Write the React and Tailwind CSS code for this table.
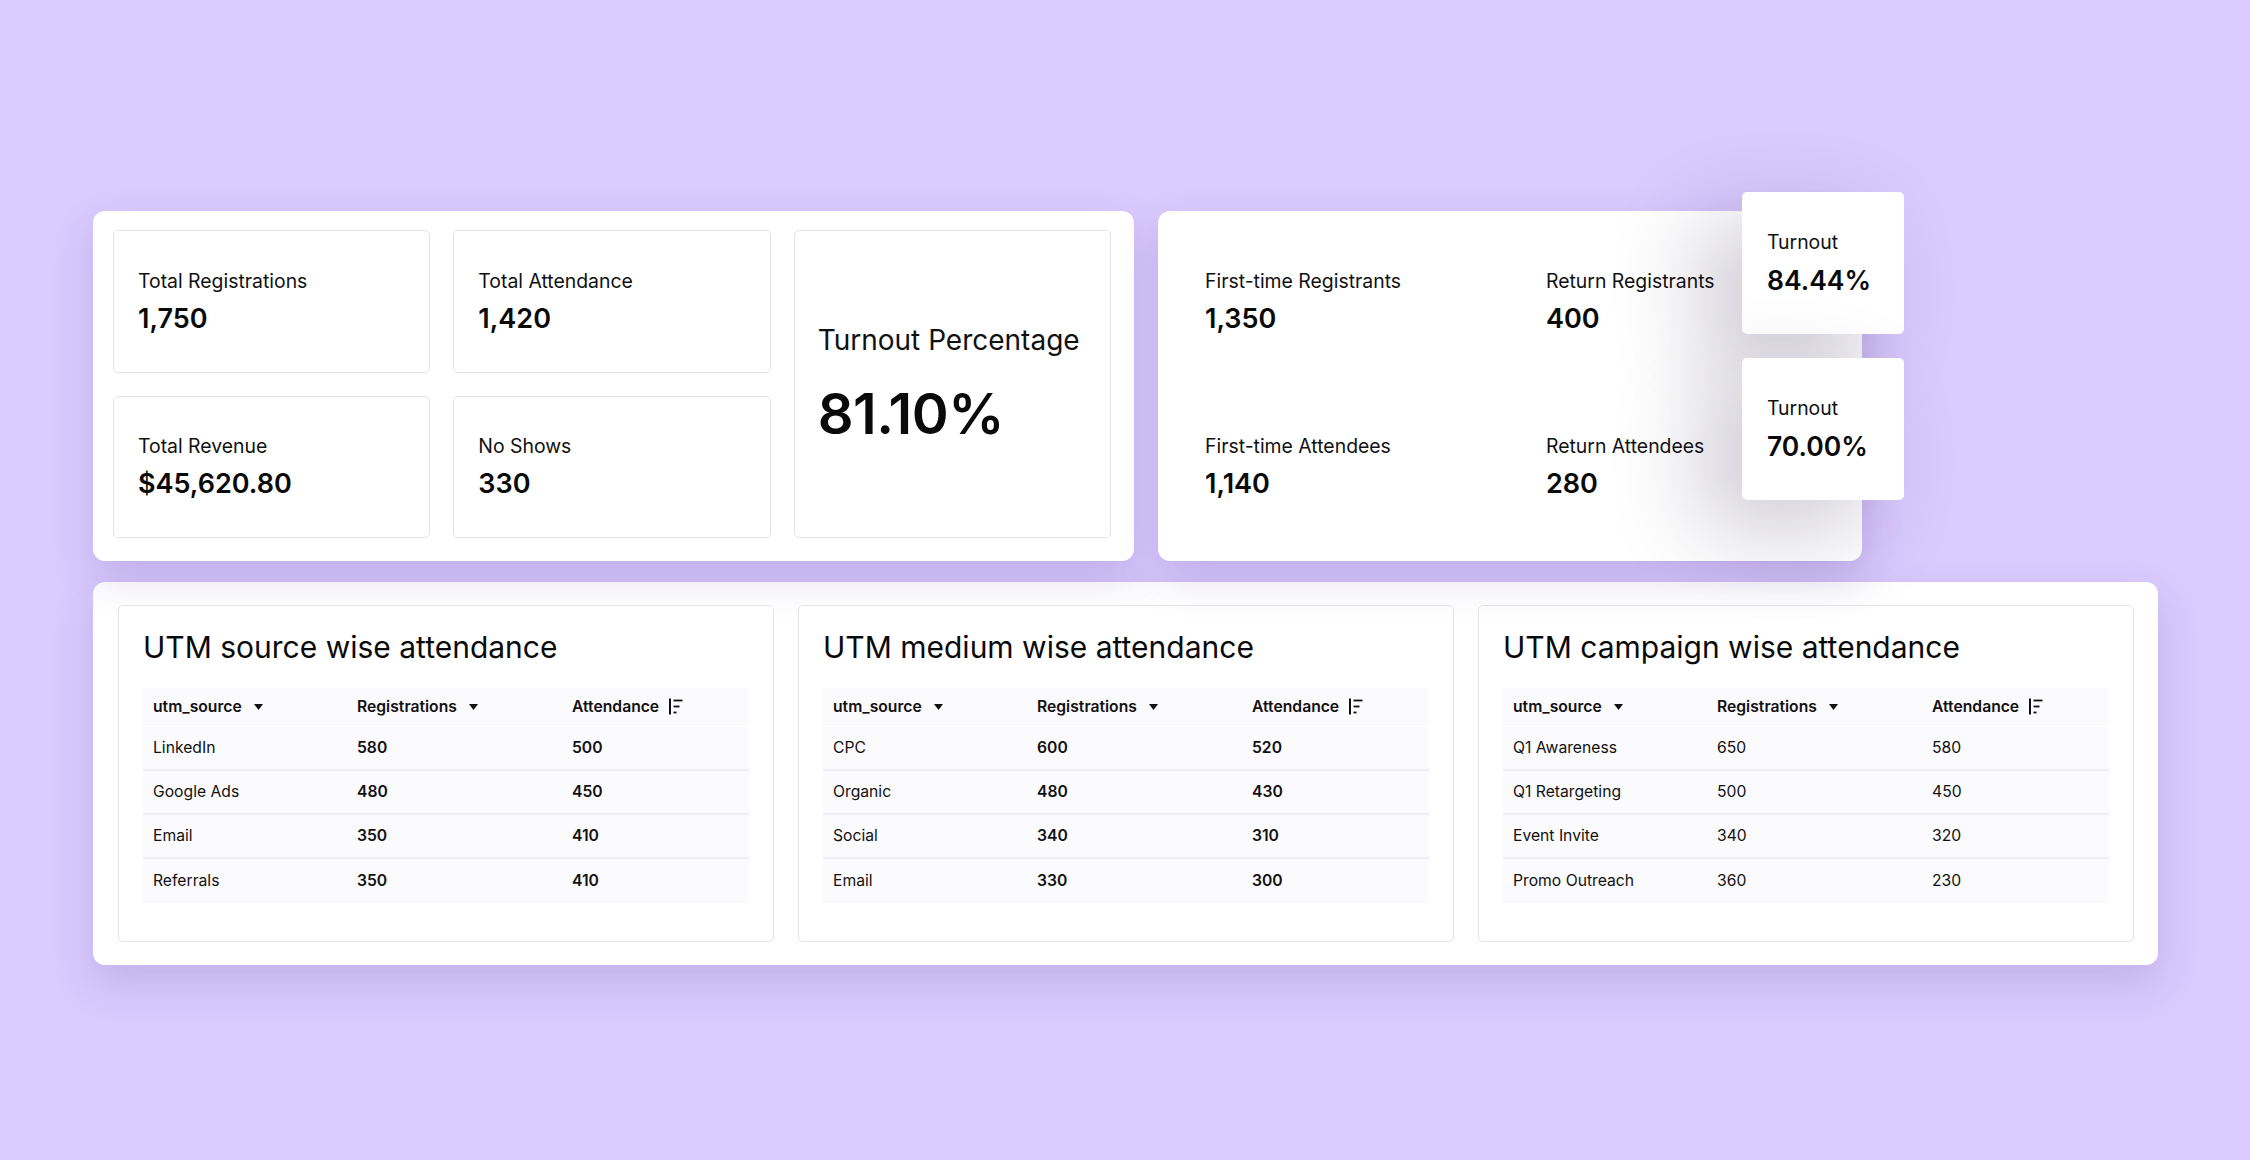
import React from "react";

function Stat({ label, value }) {
  return (
    <div className="flex flex-col justify-center pl-[24px] border border-[#e4e4e7] rounded-[5px] bg-white">
      <div className="text-[19.4px] leading-[28px] text-[#111111]">{label}</div>
      <div className="mt-[6px] text-[27px] leading-[36px] font-semibold text-[#0a0a0a]">{value}</div>
    </div>
  );
}

function PlainStat({ label, value }) {
  return (
    <div className="flex flex-col justify-center">
      <div className="text-[19.4px] leading-[28px] text-[#111111]">{label}</div>
      <div className="mt-[6px] text-[27px] leading-[36px] font-semibold text-[#0a0a0a]">{value}</div>
    </div>
  );
}

function Caret() {
  return (
    <svg width="9" height="6" viewBox="0 0 9 6" className="ml-[12px] shrink-0">
      <path d="M0 0 L9 0 L4.5 6 Z" fill="#111111" />
    </svg>
  );
}

function SortIcon() {
  return (
    <svg width="14" height="17" viewBox="0 0 14 17" className="ml-[10px] shrink-0">
      <path d="M1 0.5 V16.5" stroke="#111111" strokeWidth="2" />
      <path d="M4.5 2.5 H13.5" stroke="#111111" strokeWidth="1.8" />
      <path d="M4.5 8.5 H10.5" stroke="#111111" strokeWidth="1.8" />
      <path d="M4.5 14.5 H7.5" stroke="#111111" strokeWidth="1.8" />
    </svg>
  );
}

function UtmTable({ title, rows, boldValues }) {
  return (
    <div className="h-[337px] border border-[#e4e4e7] rounded-[5px] bg-white px-[24px] pt-[23px]">
      <div className="text-[30px] leading-[36px] text-[#0a0a0a]">{title}</div>
      <div className="mt-[23px]">
        <div className="grid grid-cols-[204px_215px_1fr] h-[38px] items-center px-[10px] bg-[#fbfafd] text-[15.7px] font-semibold text-[#111111]">
          <div className="flex items-center">utm_source<Caret /></div>
          <div className="flex items-center">Registrations<Caret /></div>
          <div className="flex items-center">Attendance<SortIcon /></div>
        </div>
        <div className="mt-[1px]">
          {rows.map((r, i) => (
            <div
              key={i}
              className={
                "grid grid-cols-[204px_215px_1fr] h-[44px] items-center px-[10px] bg-[#fbfafd] text-[15.7px] text-[#111111] " +
                (i < rows.length - 1 ? "border-b-2 border-[#efedf3]" : "")
              }
            >
              <div>{r[0]}</div>
              <div className={boldValues ? "font-semibold" : ""}>{r[1]}</div>
              <div className={boldValues ? "font-semibold" : ""}>{r[2]}</div>
            </div>
          ))}
        </div>
      </div>
    </div>
  );
}

export default function App() {
  return (
    <div className="w-[2250px] h-[1160px] bg-[#dacafd] pt-[211px] pl-[93px] font-['Inter','Liberation_Sans',sans-serif] overflow-hidden">
      <div className="flex items-start gap-[24px]">
        <div className="w-[1041px] h-[350px] bg-white rounded-[12px] shadow-[0_18px_40px_rgba(90,60,160,0.18)] pt-[19px] pl-[20px] pr-[23px] pb-[23px] grid grid-cols-3 grid-rows-[143px_142px] gap-[23px]">
          <Stat label="Total Registrations" value="1,750" />
          <Stat label="Total Attendance" value="1,420" />
          <div className="row-span-2 flex flex-col justify-center pl-[23px] border border-[#e4e4e7] rounded-[5px] bg-white">
            <div className="text-[28px] leading-[36px] text-[#111111]">Turnout Percentage</div>
            <div className="mt-[24px] text-[56px] leading-[64px] font-semibold text-[#0a0a0a] tracking-[-0.5px]">81.10%</div>
          </div>
          <Stat label="Total Revenue" value="$45,620.80" />
          <Stat label="No Shows" value="330" />
        </div>

        <div className="relative w-[704px] h-[350px] bg-white rounded-[12px] shadow-[0_18px_40px_rgba(90,60,160,0.18)] pt-[19px] pl-[47px] grid grid-cols-[341px_1fr] grid-rows-[143px_142px] gap-y-[23px]">
          <PlainStat label="First-time Registrants" value="1,350" />
          <PlainStat label="Return Registrants" value="400" />
          <PlainStat label="First-time Attendees" value="1,140" />
          <PlainStat label="Return Attendees" value="280" />

          <div className="absolute left-[584px] top-[-19px] w-[162px] h-[142px] bg-white rounded-[5px] shadow-[-40px_30px_90px_rgba(30,20,60,0.22)] flex flex-col justify-center pl-[25px]">
            <div className="text-[19.4px] leading-[28px] text-[#111111]">Turnout</div>
            <div className="mt-[6px] text-[26.5px] leading-[36px] font-semibold text-[#0a0a0a]">84.44%</div>
          </div>
          <div className="absolute left-[584px] top-[147px] w-[162px] h-[142px] bg-white rounded-[5px] shadow-[-40px_30px_90px_rgba(30,20,60,0.22)] flex flex-col justify-center pl-[25px]">
            <div className="text-[19.4px] leading-[28px] text-[#111111]">Turnout</div>
            <div className="mt-[6px] text-[26.5px] leading-[36px] font-semibold text-[#0a0a0a]">70.00%</div>
          </div>
        </div>
      </div>

      <div className="mt-[21px] w-[2065px] h-[383px] bg-white rounded-[12px] shadow-[0_18px_40px_rgba(90,60,160,0.18)] pt-[23px] pl-[25px] pr-[24px] grid grid-cols-3 gap-[24px] items-start">
        <UtmTable
          title="UTM source wise attendance"
          boldValues
          rows={[
            ["LinkedIn", "580", "500"],
            ["Google Ads", "480", "450"],
            ["Email", "350", "410"],
            ["Referrals", "350", "410"],
          ]}
        />
        <UtmTable
          title="UTM medium wise attendance"
          boldValues
          rows={[
            ["CPC", "600", "520"],
            ["Organic", "480", "430"],
            ["Social", "340", "310"],
            ["Email", "330", "300"],
          ]}
        />
        <UtmTable
          title="UTM campaign wise attendance"
          rows={[
            ["Q1 Awareness", "650", "580"],
            ["Q1 Retargeting", "500", "450"],
            ["Event Invite", "340", "320"],
            ["Promo Outreach", "360", "230"],
          ]}
        />
      </div>
    </div>
  );
}
